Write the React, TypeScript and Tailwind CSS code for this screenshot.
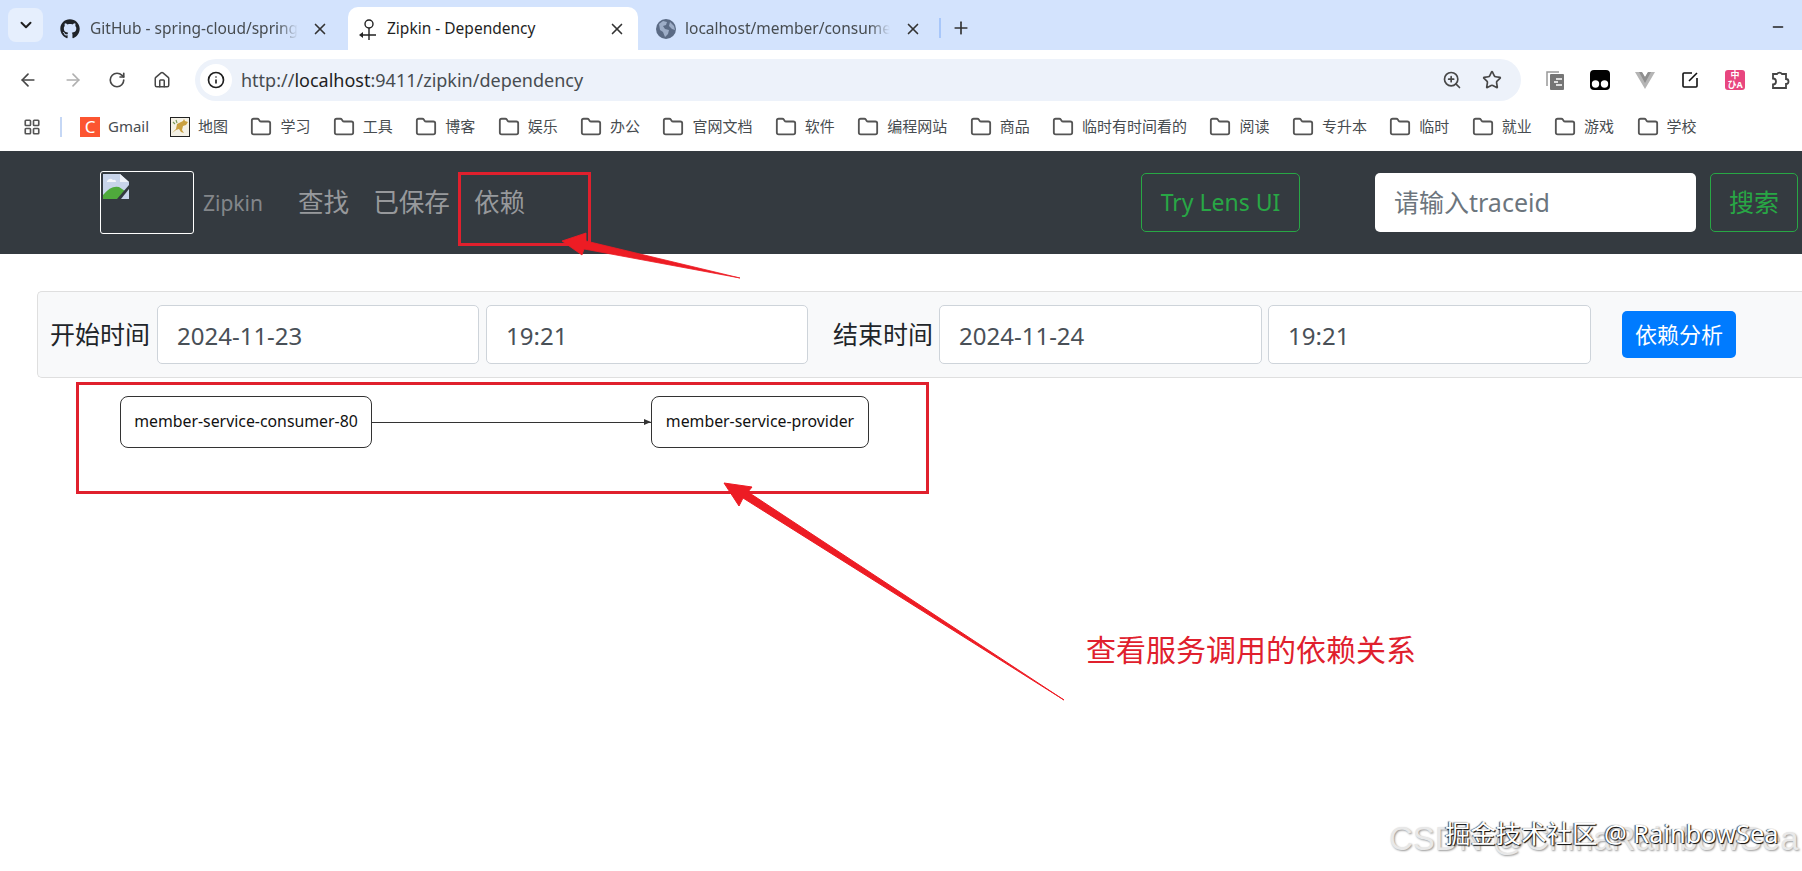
import { ArrowLeft, ArrowRight, ChevronDown, Folder, Home, Info, LayoutGrid, Minus, Plus, RotateCw, Star, X, ZoomIn } from "lucide-react"
import { FaGithub } from "react-icons/fa"

const bookmarks = ["学习", "工具", "博客", "娱乐", "办公", "官网文档", "软件", "编程网站", "商品", "临时有时间看的", "阅读", "专升本", "临时", "就业", "游戏", "学校"]

const ZipkinFavicon = () => (
  <svg viewBox="0 0 22 22" className="w-[22px] h-[22px] text-[#222]" fill="none" stroke="currentColor" strokeWidth="1.4">
    <circle cx="12" cy="6" r="4" />
    <path d="M12 10v12M6 17h13" />
    <path d="M2 17l4-3v6z" fill="currentColor" stroke="none" />
  </svg>
)

const GlobeFavicon = () => (
  <svg viewBox="0 0 20 20" className="w-5 h-5">
    <circle cx="10" cy="10" r="10" fill="#5b6b85" />
    <path d="M3 5l4-3 4 1-1 3-3 1 2 3 4 1-1 4-3 3-2-5-3-2z" fill="#d3e3fd" opacity="0.55" />
    <path d="M14 3l4 4 1 4-3-1-3-3z" fill="#d3e3fd" opacity="0.55" />
  </svg>
)

const TomcatIcon = () => (
  <svg viewBox="0 0 20 20" className="w-5 h-5">
    <rect x="0.5" y="0.5" width="19" height="19" fill="#f4f1e6" stroke="#222" />
    <path d="M2 16l4-4 1-5 6-3 1-2 1 2 3 1-2 3-3 1-1 4 2 3-3-1-2-3-3 1z" fill="#c9a040" />
    <path d="M3 5l2 2M6 3l1 3" stroke="#7a9a5a" strokeWidth="1.2" />
  </svg>
)

const BrokenImage = () => (
  <svg viewBox="0 0 26 25" className="w-[26px] h-[25px]">
    <path d="M0 0h17l9 8v17H0z" fill="#c8d4ea" />
    <path d="M17 0l9 8h-9z" fill="#eef2f8" />
    <path d="M4 7q3-4 6-1 3-1 3 2H4z" fill="#f4f6fb" />
    <path d="M0 25l0-4q8-10 16-8l6 4-6 8z" fill="#4faa3c" />
    <path d="M14 25L26 11v4L18 25z" fill="#343a40" />
  </svg>
)

const TabClose = ({ className = "" }: { className?: string }) => <X className={`w-[18px] h-[18px] text-[#333] ${className}`} strokeWidth={2.2} />

const Arrows = () => (
  <svg viewBox="0 0 1802 871" className="absolute inset-0 w-[1802px] h-[871px] pointer-events-none">
    <polygon points="562,241 586,233 586,241 740,278 584,249 582,255" fill="#ed1c24" stroke="#ed1c24" strokeWidth="0.8" />
    <polygon points="724,483 752,487 748,492 1064,700 743,498 739,506" fill="#ed1c24" stroke="#ed1c24" strokeWidth="1" />
  </svg>
)

export default function App() {
  return (
    <div className="relative w-[1802px] h-[871px] overflow-hidden bg-white font-['Noto_Sans','Noto_Sans_CJK_SC',sans-serif]">
      {/* tab strip */}
      <div className="h-[50px] bg-[#d3e3fd] flex items-end pl-2 pr-[16px]">
        <div className="w-[35px] h-[34px] mb-2 bg-[#e6effd] rounded-lg flex items-center justify-center">
          <ChevronDown className="w-[18px] h-[18px] text-[#1f1f1f]" strokeWidth={2.6} />
        </div>
        <div className="w-[305px] h-[43px] pl-[17px] flex items-center">
          <FaGithub className="w-5 h-5 text-[#1f2328]" />
          <span className="ml-[10px] w-[208px] text-[15.5px] text-[#474c50] whitespace-nowrap overflow-hidden [mask-image:linear-gradient(to_right,#000_90%,transparent)]">GitHub - spring-cloud/spring</span>
          <TabClose className="ml-[13px]" />
        </div>
        <div className="w-[290px] h-[43px] bg-white rounded-t-[10px] pl-[9px] flex items-center">
          <ZipkinFavicon />
          <span className="ml-[8px] w-[222px] text-[15.5px] text-[#1f1f1f] whitespace-nowrap">Zipkin - Dependency</span>
          <TabClose className="ml-[-1px]" />
        </div>
        <div className="w-[301px] h-[43px] pl-[18px] flex items-center">
          <GlobeFavicon />
          <span className="ml-[9px] w-[205px] text-[15.5px] text-[#474c50] whitespace-nowrap overflow-hidden [mask-image:linear-gradient(to_right,#000_90%,transparent)]">localhost/member/consumer</span>
          <TabClose className="ml-[14px]" />
        </div>
        <div className="w-[2px] h-5 mb-[12px] bg-[#a8c7fa]" />
        <Plus className="ml-[10px] mb-[12px] w-5 h-5 text-[#333]" strokeWidth={2} />
        <Minus className="ml-auto mb-[15px] w-4 h-4 text-[#222]" />
      </div>

      {/* toolbar */}
      <div className="h-[60px] bg-white rounded-tl-[10px] flex items-center pl-[18px]">
        <ArrowLeft className="w-5 h-5 text-[#474747]" strokeWidth={2} />
        <ArrowRight className="ml-[25px] w-5 h-5 text-[#b0b0b0]" strokeWidth={2} />
        <RotateCw className="ml-[25px] w-[18px] h-[18px] text-[#474747]" strokeWidth={2.2} />
        <Home className="ml-[27px] w-[18px] h-[18px] text-[#474747]" strokeWidth={2} />
        <div className="ml-6 w-[1326px] h-[42px] bg-[#edf2fa] rounded-full flex items-center pl-[5px]">
          <div className="w-8 h-8 bg-white rounded-full flex items-center justify-center">
            <Info className="w-[18px] h-[18px] text-[#1f1f1f]" strokeWidth={2.2} />
          </div>
          <span className="ml-[9px] text-[18px] text-[#474c50]">
            http://<span className="text-[#1f1f1f]">localhost</span>:9411/zipkin/dependency
          </span>
          <ZoomIn className="ml-auto w-5 h-5 text-[#474747]" strokeWidth={2} />
          <Star className="ml-[20px] mr-[19px] w-5 h-5 text-[#474747]" strokeWidth={2} />
        </div>
        <div className="ml-[24px] flex items-center gap-[25px]">
          <svg viewBox="0 0 20 20" className="w-5 h-5">
            <path d="M2 16V2h12" fill="none" stroke="#999" strokeWidth="1.5" />
            <rect x="5" y="4" width="14" height="16" rx="1" fill="#757575" />
            <path d="M11 9h6M9 12h4M11 15h6" stroke="#fff" strokeWidth="1.6" />
          </svg>
          <svg viewBox="0 0 20 20" className="w-5 h-5">
            <rect width="20" height="20" rx="4" fill="#000" />
            <circle cx="5.5" cy="14" r="3.7" fill="#fff" />
            <circle cx="14.5" cy="14" r="3.7" fill="#fff" />
          </svg>
          <svg viewBox="0 0 20 20" className="w-5 h-5">
            <path d="M0 2h7l3 5 3-5h7L10 19z" fill="#b5b5b5" />
            <path d="M7 2h6l-3 5z" fill="#fff" />
            <path d="M4 2h3l3 5 3-5h3L10 13z" fill="#8f8f8f" />
          </svg>
          <svg viewBox="0 0 20 20" className="w-5 h-5" fill="none" stroke="#111" strokeWidth="1.6">
            <path d="M12 3H4a1 1 0 0 0-1 1v12a1 1 0 0 0 1 1h12a1 1 0 0 0 1-1V8M17 3l-8 8" />
          </svg>
          <div className="w-5 h-5 rounded-[3px] bg-[#e8467f] text-white text-[9px] leading-[10px] font-bold flex flex-col items-center justify-center">
            <span>中</span>
            <span>ひA</span>
          </div>
          <svg viewBox="0 0 20 20" className="w-5 h-5" fill="none" stroke="#444" strokeWidth="1.8">
            <path d="M3 4h4a3 3 0 0 1 5 0h4v5a2.5 2.5 0 0 1 0 5v4H3v-3.5a3 3 0 0 0 0-6z" />
          </svg>
        </div>
      </div>

      {/* bookmarks */}
      <div className="h-[41px] pb-[8px] flex items-center pl-[23px] text-[15px] text-[#474c50] whitespace-nowrap">
        <LayoutGrid className="w-[18px] h-[18px] text-[#555]" strokeWidth={2.2} />
        <div className="ml-[19px] w-[2px] h-5 bg-[#c5d7f5]" />
        <div className="ml-[18px] w-5 h-5 bg-[#fc5531] text-white text-[17px] leading-5 text-center">C</div>
        <span className="ml-2 w-[41px]">Gmail</span>
        <div className="ml-[21px]"><TomcatIcon /></div>
        <span className="ml-2">地图</span>
        {bookmarks.map((name) => (
          <div key={name} className="ml-[22.4px] flex items-center gap-2">
            <Folder className="w-[22px] h-[22px] text-[#555]" strokeWidth={2} />
            <span>{name}</span>
          </div>
        ))}
      </div>

      {/* zipkin navbar */}
      <div className="h-[103px] bg-[#343a40] flex items-center pl-[100px] pr-1">
        <div className="w-[94px] h-[63px] border border-white rounded-[3px] pl-[2px] pt-[2px] mb-[1px]">
          <BrokenImage />
        </div>
        <span className="ml-[9px] pt-[2px] text-[21px] text-[#83868a]">Zipkin</span>
        <nav className="ml-[35px] pt-[2px] flex gap-[24px] text-[25.6px] text-[#97999c]">
          <span>查找</span>
          <span>已保存</span>
          <span>依赖</span>
        </nav>
        <button className="ml-auto w-[159px] h-[59px] border border-[#28a745] rounded-[5px] text-[23px] text-[#28a745]">Try Lens UI</button>
        <div className="ml-[75px] w-[321px] h-[59px] bg-white rounded-[5px] pl-[19px] flex items-center text-[25px] text-[#6c757d]">请输入traceid</div>
        <button className="ml-[14px] w-[88px] h-[59px] border border-[#28a745] rounded-[5px] text-[25px] text-[#28a745]">搜索</button>
      </div>

      {/* filter bar */}
      <div className="mt-[37px] ml-[37px] h-[87px] bg-[#f8f9fa] border border-r-0 border-[#dfdfdf] rounded-l-[5px] flex items-center pl-3 text-[25px] text-[#212529]">
        <span>开始时间</span>
        <div className="ml-[7px] w-[322px] h-[59px] bg-white border border-[#ced4da] rounded-[5px] pl-[19px] pt-[2px] flex items-center text-[24px] text-[#495057]">2024-11-23</div>
        <div className="ml-[7px] w-[322px] h-[59px] bg-white border border-[#ced4da] rounded-[5px] pl-[19px] pt-[2px] flex items-center text-[24px] text-[#495057]">19:21</div>
        <span className="ml-[25px]">结束时间</span>
        <div className="ml-[6px] w-[323px] h-[59px] bg-white border border-[#ced4da] rounded-[5px] pl-[19px] pt-[2px] flex items-center text-[24px] text-[#495057]">2024-11-24</div>
        <div className="ml-[6px] w-[323px] h-[59px] bg-white border border-[#ced4da] rounded-[5px] pl-[19px] pt-[2px] flex items-center text-[24px] text-[#495057]">19:21</div>
        <button className="ml-[31px] w-[114px] h-[47px] bg-[#007bff] rounded-[5px] text-[22px] text-white">依赖分析</button>
      </div>

      {/* dependency graph */}
      <div className="mt-[18px] ml-[120px] flex items-center text-[15.85px] text-[#111] w-[749px]">
        <div className="w-[252px] h-[52px] border border-[#333] rounded-[8px] flex items-center justify-center whitespace-nowrap">member-service-consumer-80</div>
        <div className="flex-1 relative h-px bg-[#333]">
          <div className="absolute right-0 top-[-3px] w-0 h-0 border-y-[3.5px] border-y-transparent border-l-[7px] border-l-[#333]" />
        </div>
        <div className="w-[218px] h-[52px] border border-[#333] rounded-[8px] flex items-center justify-center whitespace-nowrap">member-service-provider</div>
      </div>

      {/* annotations drawn on top of the page */}
      <div className="absolute left-[458px] top-[172px] w-[133px] h-[74px] border-[3px] border-[#e0202d]" />
      <div className="absolute left-[76px] top-[382px] w-[853px] h-[112px] border-[3px] border-[#e0202d]" />
      <Arrows />
      <div className="absolute left-[1086px] top-[628px] text-[30px] leading-[44px] text-[#e0202d] whitespace-nowrap">查看服务调用的依赖关系</div>

      {/* watermarks */}
      <div className="absolute left-[1389px] top-[819px] text-[33px] leading-[40px] text-[#e8e8e8] [text-shadow:1px_1px_2px_#999] whitespace-nowrap font-['Liberation_Sans','Noto_Sans_CJK_SC',sans-serif]">CSDN @ChinaRainbowSea</div>
      <div className="absolute left-[1445px] top-[816px] text-[25.4px] leading-[34px] text-white [text-shadow:1px_1px_1px_#000,-1px_0_1px_#444] whitespace-nowrap">掘金技术社区 @ RainbowSea</div>
    </div>
  )
}
